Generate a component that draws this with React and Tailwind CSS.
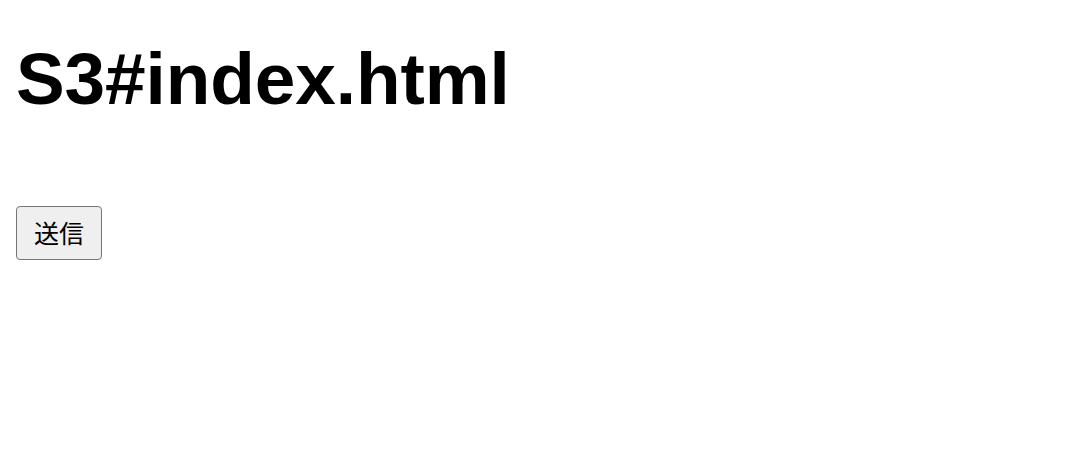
export default function App() {
  return (
    <div className="min-h-screen bg-white p-4 text-black">
      <h1 className="mt-[21px] text-[73px] font-bold leading-[83px] tracking-[-0.1px] [font-family:'Liberation_Sans',Arial,sans-serif]">
        S3#index.html
      </h1>
      <form className="mt-[86px]" onSubmit={(e) => e.preventDefault()}>
        <button
          type="submit"
          className="flex h-[54px] w-[86px] items-center justify-center rounded-[4px] border border-[#767676] bg-[#efefef] text-[25px] text-black [font-family:'Noto_Sans_CJK_JP',sans-serif]"
        >
          送信
        </button>
      </form>
    </div>
  );
}
